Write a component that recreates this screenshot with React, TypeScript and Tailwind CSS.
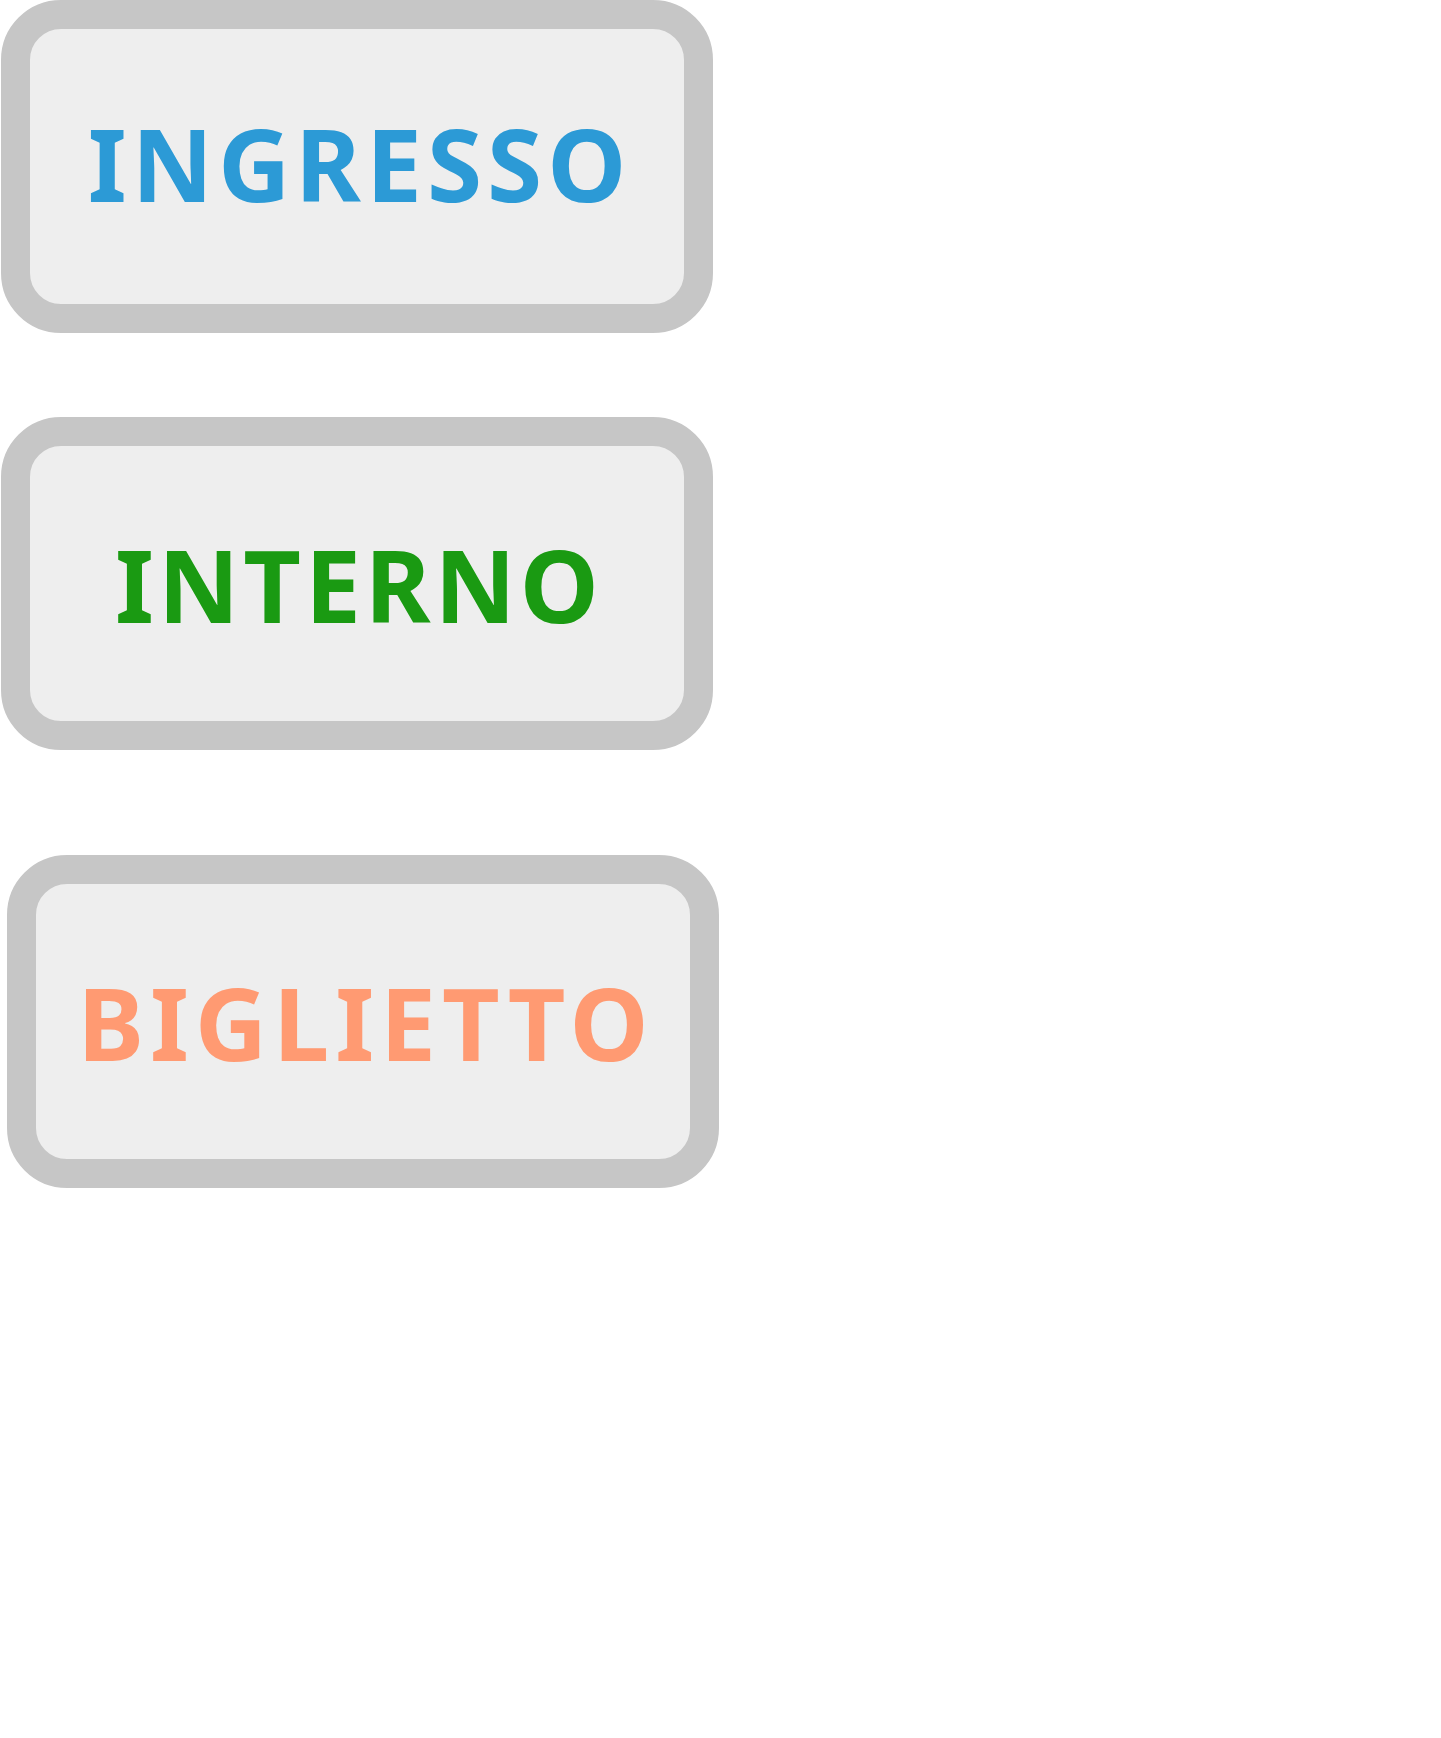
const labels = [
  { text: "INGRESSO", color: "text-[#2c9ad6] tracking-[5px] pl-[5px] pb-[7px]", wrap: "ml-[1px]" },
  { text: "INTERNO", color: "text-[#1a9a12] tracking-[4px] pl-[4px]", wrap: "ml-[1px] mt-[84px]" },
  { text: "BIGLIETTO", color: "text-[#ff9a72] tracking-[6px] pl-[6px]", wrap: "ml-[7px] mt-[105px]" },
];

function LabelBox({ text, color, wrap }: { text: string; color: string; wrap: string }) {
  return (
    <div
      className={`${wrap} w-[712px] h-[333px] rounded-[60px] border-[29px] border-[#c6c6c6] bg-[#eeeeee] flex items-center justify-center`}
    >
      <span className={`${color} font-['Noto_Sans',sans-serif] font-bold text-[100px] leading-none`}>
        {text}
      </span>
    </div>
  );
}

export default function App() {
  return (
    <div className="w-[1441px] h-[1738px] bg-white flex flex-col">
      {labels.map((l) => (
        <LabelBox key={l.text} {...l} />
      ))}
    </div>
  );
}
